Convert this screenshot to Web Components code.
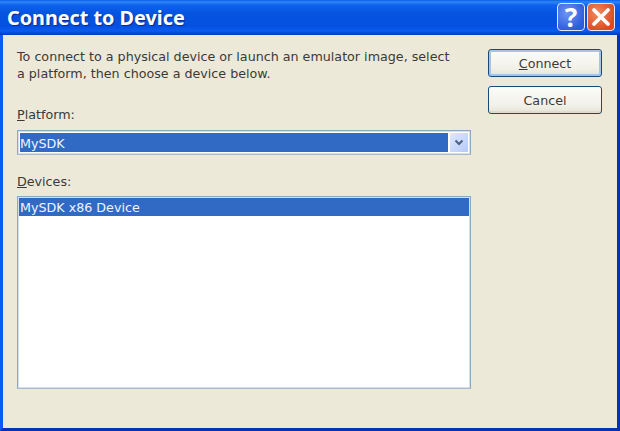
<!DOCTYPE html>
<html>
<head>
<meta charset="utf-8">
<title>Connect to Device</title>
<style>
  html, body { margin: 0; padding: 0; background: #ece9d8; }
  body { width: 620px; height: 431px; overflow: hidden; font: 12.7px "DejaVu Sans", sans-serif; color: #3a3a3a; }
</style>
</head>
<body>
<xp-window caption="Connect to Device">
  <div slot="main">
    <xp-text>To connect to a physical device or launch an emulator image, select<br>a platform, then choose a device below.</xp-text>
    <xp-field top="24">
      <span slot="label"><u>P</u>latform:</span>
      <xp-combo>MySDK</xp-combo>
    </xp-field>
    <xp-field top="18" gap="6">
      <span slot="label"><u>D</u>evices:</span>
      <xp-list>MySDK x86 Device</xp-list>
    </xp-field>
  </div>
  <xp-button slot="side" default><u>C</u>onnect</xp-button>
  <xp-button slot="side">Cancel</xp-button>
</xp-window>

<script>
(function (customElements) {
  class XpWindow extends HTMLElement {
    connectedCallback() {
      const caption = this.getAttribute('caption') || '';
      this.attachShadow({ mode: 'open' }).innerHTML = `
      <style>
        :host {
          display: flex; flex-direction: column;
          width: 620px; height: 431px; box-sizing: border-box;
          background: #0a36d0;
        }
        .bar {
          flex: 0 0 35px; display: flex; align-items: center;
          padding: 0 5px 1px 7px; box-sizing: border-box;
          background: linear-gradient(#0a5fe8 0, #2f86f8 2px, #0e62ea 5px, #0553e0 14px, #0550e0 26px, #0a5cf0 31px, #0438c4 35px);
        }
        .title {
          flex: 1; color: #fff; font: bold 19.8px "Noto Sans", sans-serif;
          text-shadow: 1px 1px 1px #0a2a90;
        }
        .ctl {
          width: 28px; height: 28px; box-sizing: border-box; margin-left: 2px;
          border: 1px solid #dfe8fc; border-radius: 4px;
          display: flex; align-items: center; justify-content: center;
        }
        .help { background: radial-gradient(circle at 35% 35%, #6d94f4, #2c5cdc 75%); }
        .close { background: radial-gradient(circle at 35% 35%, #ee8c62, #dc4a1e 75%); }
        .help span { color: #fff; font: bold 26px "Noto Sans", sans-serif; line-height: 26px; }
        .frame {
          flex: 1; display: flex; min-height: 0;
          border-left: 3px solid #0a5cf0; border-right: 3px solid #0831b8; border-bottom: 3px solid #0831b8;
          background: #ece9d8; box-sizing: border-box;
          padding: 14px 18px 0 14px; column-gap: 17px;
        }
        .main { flex: 0 0 454px; margin-top: -1px; }
        .side { flex: 1; display: flex; flex-direction: column; row-gap: 9px; }
      </style>
      <div class="bar">
        <div class="title">${caption}</div>
        <div class="ctl help"><span>?</span></div>
        <div class="ctl close">
          <svg width="20" height="20" viewBox="0 0 20 20"><path d="M3 3 L17 17 M17 3 L3 17" stroke="#fff" stroke-width="3.8" stroke-linecap="round"/></svg>
        </div>
      </div>
      <div class="frame">
        <div class="main"><slot name="main"></slot></div>
        <div class="side"><slot name="side"></slot></div>
      </div>`;
    }
  }

  class XpText extends HTMLElement {
    connectedCallback() {
      this.attachShadow({ mode: 'open' }).innerHTML = `
      <style>:host { display: block; line-height: 17px; white-space: nowrap; }</style>
      <slot></slot>`;
    }
  }

  class XpField extends HTMLElement {
    connectedCallback() {
      const top = this.getAttribute('top') || 0;
      const gap = this.getAttribute('gap') || 7;
      this.attachShadow({ mode: 'open' }).innerHTML = `
      <style>
        :host { display: block; margin-top: ${top}px; }
        .label { line-height: 17px; height: 17px; margin-bottom: ${gap}px; }
      </style>
      <div class="label"><slot name="label"></slot></div>
      <slot></slot>`;
    }
  }

  class XpCombo extends HTMLElement {
    connectedCallback() {
      this.attachShadow({ mode: 'open' }).innerHTML = `
      <style>
        :host {
          display: flex; height: 25px; box-sizing: border-box;
          border: 1px solid #8ea8c0; border-bottom-color: #a9bccd; background: #fff; padding: 2px;
          box-shadow: inset 0 0 0 1px #d5dfe8;
        }
        .value {
          flex: 1; background: #316ac5; color: #eef3ff; line-height: 21px;
          margin-right: 2px;
        }
        .btn {
          flex: 0 0 18px; background: linear-gradient(135deg, #dfe8fe, #b6c9f6);
          display: flex; align-items: center; justify-content: center;
        }
      </style>
      <div class="value"><slot></slot></div>
      <div class="btn">
        <svg width="10" height="7" viewBox="0 0 10 7"><path d="M1.5 1.5 L5 5 L8.5 1.5" fill="none" stroke="#4d6185" stroke-width="2"/></svg>
      </div>`;
    }
  }

  class XpList extends HTMLElement {
    connectedCallback() {
      this.attachShadow({ mode: 'open' }).innerHTML = `
      <style>
        :host {
          display: block; height: 193px; box-sizing: border-box;
          border: 1px solid #8ea8c0; border-bottom-color: #a9bccd; background: #fff; padding: 1px;
          box-shadow: inset 0 0 0 1px #d5dfe8;
        }
        .row { background: #316ac5; color: #eef3ff; line-height: 20px; height: 18px; padding-left: 1px; }
      </style>
      <div class="row"><slot></slot></div>`;
    }
  }

  class XpButton extends HTMLElement {
    connectedCallback() {
      const ring = this.hasAttribute('default')
        ? 'box-shadow: inset 0 0 0 2px #a9c2ea;'
        : 'box-shadow: inset 0 -2px 0 #e0ddd0;';
      this.attachShadow({ mode: 'open' }).innerHTML = `
      <style>
        :host {
          display: flex; align-items: center; justify-content: center;
          width: 114px; height: 28px; box-sizing: border-box;
          border: 1px solid #1c4a78; border-radius: 3px;
          background: linear-gradient(#fcfcf9, #f2f1e8 70%, #e6e3d6);
          ${ring}
        }
      </style>
      <slot></slot>`;
    }
  }

  customElements.define('xp-window', XpWindow);
  customElements.define('xp-text', XpText);
  customElements.define('xp-field', XpField);
  customElements.define('xp-combo', XpCombo);
  customElements.define('xp-list', XpList);
  customElements.define('xp-button', XpButton);
})(window.customElements);
</script>
</body>
</html>
